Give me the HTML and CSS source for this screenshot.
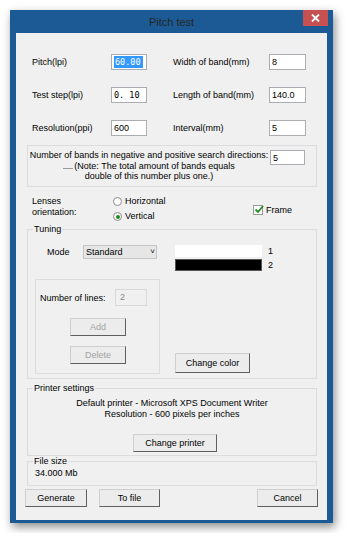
FILE: index.html
```html
<!DOCTYPE html>
<html lang="en">
<head>
    <meta charset="UTF-8">
    <title>Pitch test</title>
    <link rel="stylesheet" href="styles.css">
</head>
<body>

<div class="window">
    <div class="titlebar">
        <span></span>
        <span class="title">Pitch test</span>
        <span class="close-btn">
            <svg width="9" height="8" viewBox="0 0 9 8"><path d="M1 0.5 L8 7.5 M8 0.5 L1 7.5" stroke="#fff" stroke-width="1.8"/></svg>
        </span>
    </div>

    <div class="content">
        <div class="params">
            <span>Pitch(lpi)</span>
            <div class="input mono"><span class="selected">60.00</span></div>
            <span></span>
            <span>Width of band(mm)</span>
            <div class="input">8</div>

            <span>Test step(lpi)</span>
            <div class="input mono">0. 10</div>
            <span></span>
            <span>Length of band(mm)</span>
            <div class="input">140.0</div>

            <span>Resolution(ppi)</span>
            <div class="input">600</div>
            <span></span>
            <span>Interval(mm)</span>
            <div class="input">5</div>
        </div>

        <div class="box bands">
            <div class="bands-text">
                Number of bands in negative and positive search directions:<br>
                <span class="dash"></span>(Note: The total amount of bands equals<br>
                double of this number plus one.)
            </div>
            <div class="input">5</div>
        </div>

        <div class="lenses">
            <div class="lenses-label">Lenses<br>orientation:</div>
            <div class="radios">
                <div class="radio-row"><span class="radio"></span>Horizontal</div>
                <div class="radio-row"><span class="radio checked"></span>Vertical</div>
            </div>
            <div class="check-row">
                <span class="checkbox">
                    <svg width="10" height="9" viewBox="0 0 10 9"><path d="M1.5 4.5 L4 7 L9 1" fill="none" stroke="#1e8c1e" stroke-width="1.8"/></svg>
                </span>
                Frame
            </div>
        </div>

        <fieldset class="group tuning">
            <legend>Tuning</legend>
            <div class="tuning-grid">
                <div class="tuning-left">
                    <div class="mode-row">
                        <span class="mode-label">Mode</span>
                        <div class="select">Standard<span class="arrow">&#709;</span></div>
                    </div>
                    <div class="box lines-box">
                        <div class="lines-row">
                            <span>Number of lines:</span>
                            <div class="input disabled">2</div>
                        </div>
                        <button class="btn small" disabled>Add</button>
                        <button class="btn small" disabled>Delete</button>
                    </div>
                </div>
                <div class="tuning-right">
                    <div class="swatch-row"><span class="swatch white"></span>1</div>
                    <div class="swatch-row"><span class="swatch black"></span>2</div>
                    <button class="btn color-btn">Change color</button>
                </div>
            </div>
        </fieldset>

        <fieldset class="group printer">
            <legend>Printer settings</legend>
            <div class="printer-body">
                <div class="printer-text">
                    Default printer - Microsoft XPS Document Writer<br>
                    Resolution - 600 pixels per inches
                </div>
                <button class="btn printer-btn">Change printer</button>
            </div>
        </fieldset>

        <fieldset class="group filesize">
            <legend>File size</legend>
            <div class="filesize-value">34.000 Mb</div>
        </fieldset>

        <div class="actions">
            <button class="btn">Generate</button>
            <button class="btn">To file</button>
            <button class="btn cancel">Cancel</button>
        </div>
    </div>
</div>

</body>
</html>
```

FILE: styles.css
```css
body {
    margin: 0;
    padding: 10px;
    background-color: #fff;
    font-family: "Liberation Sans", Arial, sans-serif;
    font-size: 9px;
    color: #000;
}
.window {
    width: 311px;
    background-color: #1c5a96;
    padding: 0 6px 3px;
    box-shadow: 2px 4px 9px rgba(0,0,0,0.45);
}
.titlebar {
    display: grid;
    grid-template-columns: 1fr auto 1fr;
    height: 23px;
    margin: 0 -6px;
    padding: 0 5px;
}
.title {
    align-self: center;
    font-size: 11px;
    color: #262626;
}
.close-btn {
    justify-self: end;
    width: 25px;
    height: 16px;
    background-color: #c75050;
    display: flex;
    justify-content: center;
    align-items: center;
}
.content {
    background-color: #f0f0f0;
    padding: 21px 10px 13px 11px;
}
.params {
    display: grid;
    grid-template-columns: 79px 36px 26px 96px 37px;
    grid-auto-rows: 16px;
    row-gap: 17px;
    margin-left: 5px;
    align-items: center;
}
.input {
    height: 16px;
    box-sizing: border-box;
    border: 1px solid #abadb3;
    background-color: #fff;
    padding-left: 2px;
    line-height: 14px;
}
.mono {
    font-family: "DejaVu Sans Mono", monospace;
    font-size: 8.5px;
}
.selected {
    background-color: #3399ff;
    color: #fff;
    padding: 1px 2px 1px 1px;
}
.box {
    border: 1px solid #dcdcdc;
}
.bands {
    margin-top: 9px;
    display: grid;
    grid-template-columns: 242px 35px;
    padding: 4px 0 4px 0;
    height: 32px;
}
.bands-text {
    text-align: center;
    line-height: 10.5px;
}
.bands .input {
    height: 15px;
}
.dash {
    display: inline-block;
    width: 10px;
    border-bottom: 1px solid #999;
    margin-right: 1px;
}
.lenses {
    display: grid;
    grid-template-columns: 81px 140px auto;
    margin: 9px 0 0 5px;
    line-height: 11px;
}
.radio-row {
    display: flex;
    align-items: center;
    height: 11px;
}
.radio-row + .radio-row {
    margin-top: 4px;
}
.radio {
    width: 7px;
    height: 7px;
    border: 1px solid #8a8a8a;
    border-radius: 50%;
    background-color: #fff;
    margin-right: 3px;
    display: flex;
    justify-content: center;
    align-items: center;
}
.radio.checked::after {
    content: "";
    width: 4px;
    height: 4px;
    border-radius: 50%;
    background-color: #1b8e1b;
}
.check-row {
    display: flex;
    align-items: center;
    align-self: center;
    margin-top: 2px;
}
.checkbox {
    width: 8px;
    height: 8px;
    border: 1px solid #9a9a9a;
    background-color: #fff;
    margin-right: 3px;
    position: relative;
}
.checkbox svg {
    position: absolute;
    left: 0;
    top: -1px;
}
.group {
    margin: 0;
    border: 1px solid #dcdcdc;
    padding: 0;
}
.group legend {
    padding: 0 1px;
    margin-left: 5px;
    line-height: 11px;
}
.tuning {
    margin-top: 2px;
    padding: 10px 0 4px 0;
}
.tuning-grid {
    display: grid;
    grid-template-columns: 125px 100px;
    column-gap: 15px;
    padding-left: 7px;
}
.mode-row {
    display: flex;
    align-items: center;
    padding-left: 12px;
    height: 14px;
}
.mode-label {
    width: 36px;
}
.select {
    width: 74px;
    height: 14px;
    box-sizing: border-box;
    border: 1px solid #c5c5c5;
    background-color: #e6e6e6;
    padding-left: 2px;
    line-height: 12px;
    display: flex;
    justify-content: space-between;
}
.arrow {
    font-size: 8px;
    margin-right: 1px;
}
.lines-box {
    margin-top: 20px;
    height: 95px;
    box-sizing: border-box;
    padding: 9px 0 0 4px;
    display: flex;
    flex-direction: column;
}
.lines-row {
    display: flex;
    align-items: center;
}
.lines-row span {
    width: 75px;
}
.lines-row .input {
    width: 32px;
    height: 17px;
    line-height: 15px;
    border-color: #d9d9d9;
    background-color: #f0f0f0;
    color: #8a8a8a;
    padding-left: 4px;
}
.btn {
    font-family: "Liberation Sans", Arial, sans-serif;
    font-size: 9px;
    color: #000;
    background-color: #ececec;
    border: 1px solid;
    border-color: #cfcfcf #5f5f5f #5f5f5f #cfcfcf;
    padding: 0;
    height: 18px;
    width: 61px;
}
.btn:disabled {
    color: #a3a3a3;
}
.btn.small {
    width: 56px;
    margin-left: 30px;
    margin-top: 12px;
}
.btn.small + .btn.small {
    margin-top: 10px;
}
.tuning-right {
    display: flex;
    flex-direction: column;
    align-items: flex-start;
}
.swatch-row {
    display: flex;
    align-items: center;
    height: 12px;
}
.swatch-row + .swatch-row {
    margin-top: 2px;
}
.swatch {
    width: 87px;
    height: 12px;
    box-sizing: border-box;
    margin-right: 6px;
}
.swatch.white {
    background-color: #fff;
}
.swatch.black {
    background-color: #000;
    border: 1px solid #555;
}
.color-btn {
    margin-top: auto;
    margin-bottom: 1px;
    width: 75px;
    height: 20px;
}
.printer {
    margin-top: 4px;
    padding: 4px 0 3px;
}
.printer-body {
    text-align: center;
}
.printer-text {
    line-height: 11px;
}
.printer-btn {
    margin-top: 14px;
    width: 84px;
    margin-left: 6px;
}
.filesize {
    margin-top: 0;
    padding: 1px 0 6px 0;
    line-height: 11px;
}
.filesize-value {
    padding-left: 7px;
}
.actions {
    display: flex;
    gap: 12px;
    margin: 3px -1px 0 -2px;
}
.actions .btn:first-child {
    width: 62px;
}
.actions .cancel {
    margin-left: auto;
}
```
